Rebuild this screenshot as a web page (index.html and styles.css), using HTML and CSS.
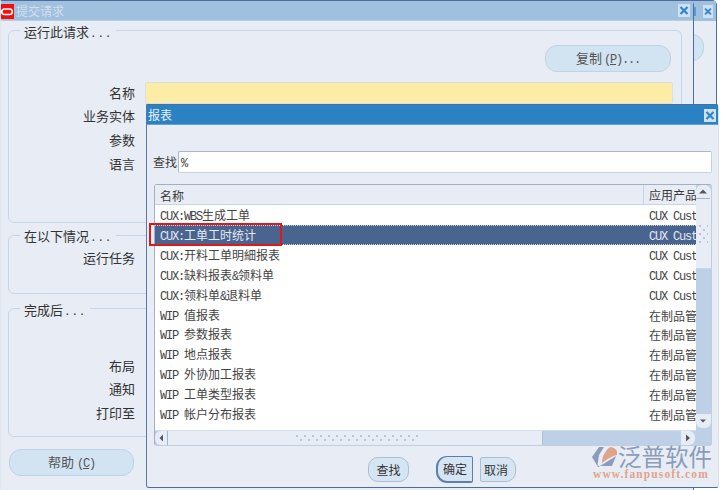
FILE: index.html
```html
<!DOCTYPE html>
<html lang="zh">
<head>
<meta charset="utf-8">
<title>提交请求</title>
<link rel="stylesheet" href="styles.css">
</head>
<body>
<div class="desk">
  <section class="win rear">
    <header class="rear-title">
      <span class="sliver"></span>
      <button class="close rear-close"><svg viewBox="0 0 12 12"><path d="M2.500 2.500l7 7M9.500 2.500l-7 7"/></svg></button>
    </header>
    <div class="rear-pill"></div>
  </section>

  <section class="win main">
    <header class="main-title">
      <svg class="oracle" viewBox="0 0 13 15"><rect width="13" height="15" fill="#f01010"/><rect x="0.800" y="5" width="10.500" height="5.500" rx="2.700" fill="none" stroke="#fff" stroke-width="1.600"/></svg>
      <span class="main-name">提交请求</span>
      <button class="close main-close"><svg viewBox="0 0 12 12"><path d="M2.500 2.500l7 7M9.500 2.500l-7 7"/></svg></button>
    </header>
    <div class="main-body">
      <div class="group g1">
        <div class="legend">运行此请求<span class="dots">...</span></div>
        <div class="copy-row"><button class="pill copy">复制<span class="m">(<u>P</u>)...</span></button></div>
        <div class="row"><span class="lab">名称</span><span class="yellow"></span></div>
        <div class="row"><span class="lab">业务实体</span></div>
        <div class="row"><span class="lab">参数</span></div>
        <div class="row"><span class="lab">语言</span></div>
      </div>
      <div class="group g2">
        <div class="legend">在以下情况<span class="dots">...</span></div>
        <div class="row"><span class="lab">运行任务</span></div>
      </div>
      <div class="group g3">
        <div class="legend">完成后<span class="dots">...</span></div>
        <div class="row"><span class="lab">布局</span></div>
        <div class="row"><span class="lab">通知</span></div>
        <div class="row"><span class="lab">打印至</span></div>
      </div>
      <button class="pill help">帮助 <span class="m">(<u>C</u>)</span></button>
    </div>
  </section>

  <section class="win modal">
    <header class="modal-title">
      <span>报表</span>
      <button class="close modal-close"><svg viewBox="0 0 12 12"><path d="M2.500 2.500l7 7M9.500 2.500l-7 7"/></svg></button>
    </header>
    <div class="find">
      <span class="find-lab">查找</span>
      <div class="find-input"><span class="m">%</span></div>
    </div>
    <div class="table">
      <div class="list">
        <div class="thead"><span class="c1">名称</span><span class="c2">应用产品</span></div>
        <div class="tr"><span class="c1"><span class="m">CUX:WBS</span>生成工单</span><span class="c2"><span class="m">CUX Custom</span></span></div>
        <div class="tr sel"><span class="c1"><span class="m">CUX:</span>工单工时统计</span><span class="c2"><span class="m">CUX Custom</span></span></div>
        <div class="tr"><span class="c1"><span class="m">CUX:</span>开料工单明細报表</span><span class="c2"><span class="m">CUX Custom</span></span></div>
        <div class="tr"><span class="c1"><span class="m">CUX:</span>缺料报表<span class="m">&amp;</span>领料单</span><span class="c2"><span class="m">CUX Custom</span></span></div>
        <div class="tr"><span class="c1"><span class="m">CUX:</span>领料单<span class="m">&amp;</span>退料单</span><span class="c2"><span class="m">CUX Custom</span></span></div>
        <div class="tr"><span class="c1"><span class="m">WIP </span>值报表</span><span class="c2">在制品管理</span></div>
        <div class="tr"><span class="c1"><span class="m">WIP </span>参数报表</span><span class="c2">在制品管理</span></div>
        <div class="tr"><span class="c1"><span class="m">WIP </span>地点报表</span><span class="c2">在制品管理</span></div>
        <div class="tr"><span class="c1"><span class="m">WIP </span>外协加工报表</span><span class="c2">在制品管理</span></div>
        <div class="tr"><span class="c1"><span class="m">WIP </span>工单类型报表</span><span class="c2">在制品管理</span></div>
        <div class="tr"><span class="c1"><span class="m">WIP </span>帐户分布报表</span><span class="c2">在制品管理</span></div>
      </div>
      <div class="vbar">
        <div class="vthumb">
          <span class="vup"><svg viewBox="0 0 14 14"><path d="M3 8.500L7 4.500l4 4z" fill="#556"/><path d="M0 13.500h14" stroke="#9db4d0"/></svg></span>
          <span class="vgrip"></span>
        </div>
        <span class="vdown"><svg viewBox="0 0 14 14"><path d="M4 5.500h6L7 8.500z" fill="#556"/></svg></span>
      </div>
      <div class="hbar">
        <div class="hthumb">
          <span class="hleft"><svg viewBox="0 0 13 14"><path d="M8 3.500v7L4.500 7z" fill="#556"/><path d="M12.500 0v14" stroke="#9db4d0"/></svg></span>
          <span class="hgrip"></span>
        </div>
        <span class="hright"><svg viewBox="0 0 13 14"><path d="M5 3.500v7L9 7z" fill="#556"/></svg></span>
      </div>
      <div class="corner"></div>
    </div>
    <div class="actions">
      <button class="act find-btn">查找</button>
      <button class="act ok">确定</button>
      <button class="act cancel">取消</button>
    </div>
    <div class="redbox"></div>
    <div class="brand">
      <svg class="brand-mark" viewBox="0 0 26 24">
        <path d="M0 11L7 1h5L7 9 5.500 19 8 21H6z" fill="#8a9cb9"/>
        <path d="M10 17c0-6 3-12 8-16 3 0 6 2 7 4v4c-5 1-10 4-15 8z" fill="#e2a488"/>
        <path d="M8 20l13-8 3-2-4 10z" fill="#8a9cb9"/>
      </svg>
      <span class="brand-cn">泛普软件</span>
      <span class="brand-url">www.fanpusoft.com</span>
    </div>
  </section>
</div>
</body>
</html>
```
FILE: styles.css
```css
* { box-sizing: border-box; }
html, body { margin: 0; padding: 0; }
body {
  width: 721px;
  height: 490px;
  overflow: hidden;
  background: #fff;
  font: 12px/1 "Noto Sans CJK SC", "Liberation Sans", sans-serif;
  color: #3a3a3a;
}
button { font: inherit; color: inherit; padding: 0; margin: 0; cursor: default; }
.desk { position: relative; width: 721px; height: 490px; overflow: hidden; }
.win { position: absolute; background: #e8edf5; }
.m { font: 12px/1 "Liberation Mono", monospace; letter-spacing: -1.200px; }
u { text-underline-offset: 1px; }

.close {
  display: block;
  border: 0;
  background: #cfe0f0;
  width: 12px;
  height: 13px;
  flex: none;
}
.close svg { display: block; width: 12px; height: 13px; }
.close path { stroke: #2f86cf; stroke-width: 2.200; fill: none; }

/* rear window */
.rear {
  left: 600px;
  top: 0;
  width: 117px;
  height: 110px;
  border: 1px solid #4e6c9c;
  border-bottom: 0;
  border-radius: 0 5px 0 0;
}
.rear-title {
  height: 20px;
  background: #9fc0de;
  display: flex;
  align-items: center;
  justify-content: flex-end;
  padding-right: 3px;
}
.sliver { width: 2px; height: 9px; background: #5b9bd6; margin-right: 7px; }
.rear-close { width: 10px; }
.rear-close svg { width: 10px; }
.rear-pill {
  margin: 13px 12px 0 auto;
  width: 40px;
  height: 27px;
  background: #d2e3f2;
  border: 1px solid #bfd3e8;
  border-radius: 12px;
}

/* main window */
.main {
  left: 0;
  top: 0;
  width: 694px;
  height: 490px;
  border-top: 1px solid #4e6c9c;
  border-right: 1px solid #4e6c9c;
  border-left: 1px solid #dfe6f0;
  border-radius: 0 5px 0 0;
}
.main-title {
  height: 20px;
  background: #9fc0de;
  border-bottom: 1px solid #b7cde4;
  display: flex;
  align-items: center;
}
.oracle { width: 13px; height: 15px; flex: none; margin-top: 2px; }
.main-name { margin-left: 2px; color: #d3dfec; font-size: 12px; }
.main-close { margin-left: auto; margin-right: 3px; }
.main-body { padding: 9px 11px 0 7px; }

.group {
  position: relative;
  border: 1px solid #c6d6ea;
  border-radius: 6px;
}
.g1 { height: 193px; }
.g2 { height: 59px; margin-top: 12px; padding-top: 10px; }
.g3 { height: 129px; margin-top: 14px; padding-top: 45px; }
.legend {
  position: absolute;
  left: 11px;
  top: -7px;
  height: 16px;
  padding: 0 4px;
  background: #e8edf5;
  line-height: 16px;
  font-size: 13px;
  color: #333;
}
.g2 .legend { top: -8px; }
.dots { font: 11px/1 "Liberation Mono", monospace; letter-spacing: 0.800px; margin-left: 1px; }
.copy-row { display: flex; justify-content: flex-end; padding: 14px 10px 9px 0; }
.pill {
  display: block;
  height: 27px;
  background: #d2e3f2;
  border: 1px solid #bfd3e8;
  border-radius: 12px;
  color: #555;
  text-align: center;
  font-size: 13px;
  padding-bottom: 1px;
}
.copy { width: 126px; }
.copy .m { margin-left: 2px; }
.help { width: 125px; margin: 12px 0 0 1px; }
.row { display: flex; align-items: center; height: 23.600px; }
.lab { width: 126px; padding-bottom: 1px; text-align: right; flex: none; color: #333; font-size: 13px; }
.yellow {
  flex: 1;
  height: 22px;
  margin: 0 8px 0 10px;
  background: #fdeca6;
  border: 1px solid #d7dfea;
  border-radius: 2px;
}

/* modal */
.modal {
  left: 146px;
  top: 104px;
  width: 573px;
  height: 384px;
  border-top: 1px solid #4e6c9c;
  border-left: 1px solid #5a78a6;
  border-bottom: 1px solid #4e6c9c;
  border-right: 1px solid #d8e0ec;
  border-radius: 0 3px 3px 3px;
}
.modal-title {
  height: 20px;
  background: #2b82c3;
  border-bottom: 1px solid #62a0d5;
  color: #e8f1fa;
  display: flex;
  align-items: center;
  justify-content: space-between;
  padding: 0 2px 0 1px;
}
.modal-close { margin-top: 1px; }
.find {
  display: flex;
  align-items: center;
  margin-top: 26px;
  padding: 0 6px 0 6px;
}
.find-lab { width: 25px; flex: none; }
.find-input {
  flex: 1;
  height: 22px;
  background: #fff;
  border: 1px solid #c5d2e2;
  border-top-color: #aab8c8;
  border-left-color: #aab8c8;
  border-radius: 2px;
  padding-left: 2px;
  line-height: 20px;
}
.table {
  display: grid;
  grid-template-columns: 541px 15px;
  grid-template-rows: 245px 15px;
  width: 558px;
  height: 262px;
  margin: 11px 0 0 7px;
  border: 1px solid #c0cede;
  border-top-color: #a4b0c0;
  border-left-color: #a4b0c0;
  border-radius: 3px;
  background: #bdd0e6;
}
.list { background: #fff; overflow: hidden; }
.thead {
  display: flex;
  height: 20px;
  padding-top: 2px;
  background: #e8edf5;
  align-items: center;
  border-bottom: 1px solid #c6d6ea;
}
.thead .c1 { padding-left: 5px; }
.thead .c2 {
  height: 19px;
  margin-top: -2px;
  padding-top: 4px;
  border-left: 1px solid #c6d6ea;
}
.c1 { width: 488px; flex: none; padding-left: 5px; white-space: nowrap; }
.c2 { flex: 1; padding-left: 5px; white-space: nowrap; overflow: hidden; }
.tr {
  display: flex;
  align-items: center;
  height: 19.850px;
  padding-top: 3px;
  color: #444;
}
.tr .c2 { padding-left: 6px; }
.sel {
  background: #4a6490;
  color: #e4e9f2;
  border-top: 1px dotted #c7d2e2;
  border-bottom: 1px dotted #c7d2e2;
}

.vbar {
  display: flex;
  flex-direction: column;
  justify-content: space-between;
  height: 245px;
  padding-bottom: 2px;
  background: #bdd0e6;
}
.vthumb {
  display: block;
  height: 84px;
  background: #e8edf5;
  border-radius: 6px 6px 0 0;
  border-bottom: 1px solid #c6d6ea;
}
.vup, .vdown, .hleft, .hright { display: block; }
.vup svg, .vdown svg { display: block; width: 14px; height: 14px; }
.vdown { background: #e8edf5; height: 14px; border-radius: 0 0 6px 6px; }
.vgrip {
  display: block;
  width: 10px;
  height: 20px;
  margin: 25px 0 0 2px;
  background-image:
    radial-gradient(circle 1px, #b4c5da 70%, transparent 100%),
    radial-gradient(circle 1px, #b4c5da 70%, transparent 100%);
  background-size: 8px 8px;
  background-position: -2px -2px, 2px 2px;
}
.hbar {
  display: flex;
  justify-content: space-between;
  background: #bdd0e6;
  border-top: 1px solid #d4dfec;
  padding-right: 1px;
}
.hthumb {
  display: flex;
  align-items: center;
  width: 388px;
  background: #e8edf5;
  border-right: 1px solid #aebfd6;
  border-radius: 6px 0 0 6px;
}
.hleft svg, .hright svg { display: block; width: 13px; height: 14px; }
.hright { width: 14px; background: #e8edf5; border-radius: 0 6px 6px 0; }
.hgrip {
  width: 124px;
  height: 8px;
  margin-left: 127px;
  background-image:
    radial-gradient(circle 1px, #b4c5da 70%, transparent 100%),
    radial-gradient(circle 1px, #b4c5da 70%, transparent 100%);
  background-size: 8px 8px;
  background-position: -2px -2px, 2px 2px;
}
.corner { background: #bdd0e6; }

.actions {
  display: flex;
  align-items: center;
  margin-top: 10px;
  padding-left: 221px;
}
.act {
  height: 25px;
  background: #d5e5f3;
  border: 1px solid #a9bfd8;
  border-radius: 10px;
  color: #333;
  text-align: center;
}
.find-btn { width: 41px; }
.ok {
  width: 37px;
  height: 27px;
  margin-left: 27px;
  border: 2px solid #5d7fac;
  border-top-width: 1px;
  border-right-width: 1px;
  border-radius: 11px 2px 2px 11px;
}
.cancel {
  width: 36px;
  margin-left: 7px;
  border-radius: 2px 10px 10px 2px;
  text-align: left;
  padding-left: 3px;
}

.redbox {
  position: absolute;
  left: 2px;
  top: 118px;
  width: 133px;
  height: 23px;
  border: 2px solid #e01818;
  pointer-events: none;
}
.brand {
  position: absolute;
  left: 445px;
  top: 341px;
  width: 122px;
  height: 36px;
}
.brand-mark { position: absolute; left: 0; top: 0; width: 26px; height: 24px; }
.brand-cn {
  position: absolute;
  left: 26px;
  top: 0;
  height: 21px;
  font-size: 23.500px;
  line-height: 21px;
  color: #8a9cb9;
  white-space: nowrap;
}
.brand-url {
  position: absolute;
  left: 1px;
  top: 22px;
  font: bold 11.500px/12px "Liberation Serif", serif;
  letter-spacing: 1.100px;
  color: #e2a488;
  white-space: nowrap;
}
```
